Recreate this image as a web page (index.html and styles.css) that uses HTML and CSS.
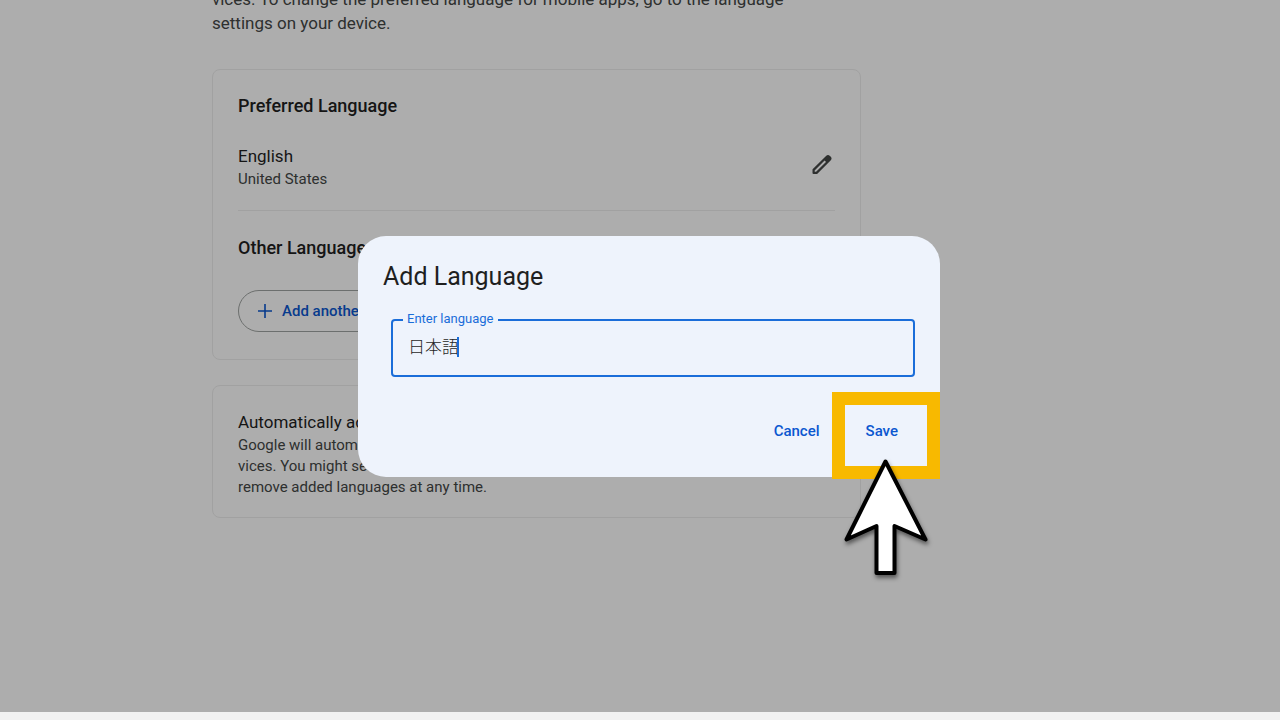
FILE: index.html
```html
<!DOCTYPE html>
<html lang="en">
<head>
<meta charset="utf-8">
<title>Language</title>
<link rel="stylesheet" href="styles.css">
</head>
<body>
<div class="app">
  <div class="viewport">
    <main class="content">
      <p class="intro">vices. To change the preferred language for mobile apps, go to the language<br>settings on your device.</p>
      <section class="card">
        <h2 class="heading">Preferred Language</h2>
        <div class="row">
          <div>
            <div class="name">English</div>
            <div class="detail">United States</div>
          </div>
          <button class="edit" type="button" aria-label="Edit language">
            <svg viewBox="0 0 26 26" width="26" height="26"><path fill="none" stroke="currentColor" stroke-width="2.200" stroke-linejoin="round" d="M4.600 20.900v-3L17.800 4.700a1.700 1.700 0 0 1 2.400 0l.6.6a1.700 1.700 0 0 1 0 2.400L7.600 20.900z"/><path fill="currentColor" d="m14.800 7.700 3-3a1.700 1.700 0 0 1 2.400 0l.6.6a1.700 1.700 0 0 1 0 2.400l-3 3z"/></svg>
          </button>
        </div>
        <h2 class="heading other">Other Languages</h2>
        <button class="add" type="button">
          <svg viewBox="0 0 14 14" width="14" height="14"><path d="M7 0v14M0 7h14" stroke="currentColor" stroke-width="1.600"/></svg>
          Add another language
        </button>
      </section>
      <section class="card auto">
        <h2 class="name">Automatically add languages</h2>
        <p class="detail note">Google will automatically add languages you frequently use in Google ser-<br>vices. You might see languages that were added for you. You can<br>remove added languages at any time.</p>
      </section>
    </main>
    <div class="scrim"></div>
    <form class="dialog" role="dialog" aria-labelledby="dialog-title">
      <h1 class="title" id="dialog-title">Add Language</h1>
      <div class="field">
        <label class="label" for="language">Enter language</label>
        <input class="input" id="language" type="text" value="日本語" autocomplete="off">
        <span class="caret"></span>
      </div>
      <div class="actions">
        <button class="action" type="button">Cancel</button>
        <button class="action" type="button">Save</button>
      </div>
    </form>
    <div class="highlight"></div>
    <svg class="pointer" viewBox="0 0 96 126" width="96" height="126"><path d="M48.500 9.500 88.500 87.500 57.500 74v47h-18V74L9.500 87.500z" fill="#fff" stroke="#000" stroke-width="4" stroke-linejoin="round"/></svg>
  </div>
  <div class="scrollbar"></div>
</div>
</body>
</html>
```
FILE: styles.css
```css
* { box-sizing: border-box; }
body { margin: 0; font-family: Roboto, "Liberation Sans", sans-serif; color: #1f1f1f; }
h1, h2, p { margin: 0; font-weight: 400; }
button { font: inherit; background: none; border: 0; padding: 0; }
.app { height: 100vh; display: flex; flex-direction: column; }
.viewport { position: relative; flex: 1; overflow: hidden; background: #fff; }
.scrollbar { height: 8px; background: #f1f1f1; }
.content { max-width: 861px; padding-left: 212px; margin-top: -13px; }
.intro { font-size: 17px; line-height: 24px; color: #444746; margin-bottom: 34px; white-space: nowrap; }
.card { border: 1px solid #eee; border-radius: 8px; padding: 24px 25px 27px; }
.heading { font-size: 18px; line-height: 24px; font-weight: 500; }
.row { display: flex; justify-content: space-between; align-items: flex-start; margin-top: 26px; padding-bottom: 20px; border-bottom: 1px solid #eee; }
.name { font-size: 17px; line-height: 24px; }
.detail { margin-top: 1px; font-size: 15px; line-height: 21px; color: #444746; }
.edit { width: 26px; height: 26px; margin-top: 8px; color: #444746; display: flex; }
.other { margin-top: 25px; }
.add { display: flex; align-items: center; gap: 10px; height: 42px; margin-top: 30px; padding: 0 19px; border: 1px solid #a0a4a2; border-radius: 21px; font-size: 15px; font-weight: 500; color: #0b57d0; }
.auto { margin-top: 25px; padding-bottom: 19px; }
.note { white-space: nowrap; }
.scrim { position: absolute; inset: 0; background: rgba(0, 0, 0, .32); }
.dialog { position: absolute; left: 358px; top: 236px; width: 582px; padding: 25px 25px 26px; border-radius: 28px; background: #eef3fc; }
.title { font-size: 25px; line-height: 32px; }
.field { position: relative; margin: 26px 0 0 8px; }
.label { position: absolute; left: 12px; top: -8px; padding: 0 4px; background: #eef3fc; font-size: 13px; line-height: 16px; color: #1a6dd9; }
.input { display: block; width: 100%; height: 58px; padding: 0 15px 6px; border: 2px solid #1a6dd9; border-radius: 4px; background: none; outline: 0; font: 300 17px "Noto Sans CJK JP", sans-serif; color: #1f1f1f; }
.caret { position: absolute; left: 66px; top: 18px; width: 2px; height: 20px; background: #1a6dd9; }
.actions { display: flex; justify-content: flex-end; gap: 46px; margin-top: 34px; padding-right: 17px; }
.action { font-size: 15px; line-height: 40px; font-weight: 500; color: #0b57d0; }
.highlight { position: absolute; left: 832px; top: 392px; width: 108px; height: 87px; border: 13px solid #f8b900; }
.pointer { position: absolute; left: 837px; top: 452px; filter: drop-shadow(1px 3px 2px rgba(0, 0, 0, .5)); }
```
